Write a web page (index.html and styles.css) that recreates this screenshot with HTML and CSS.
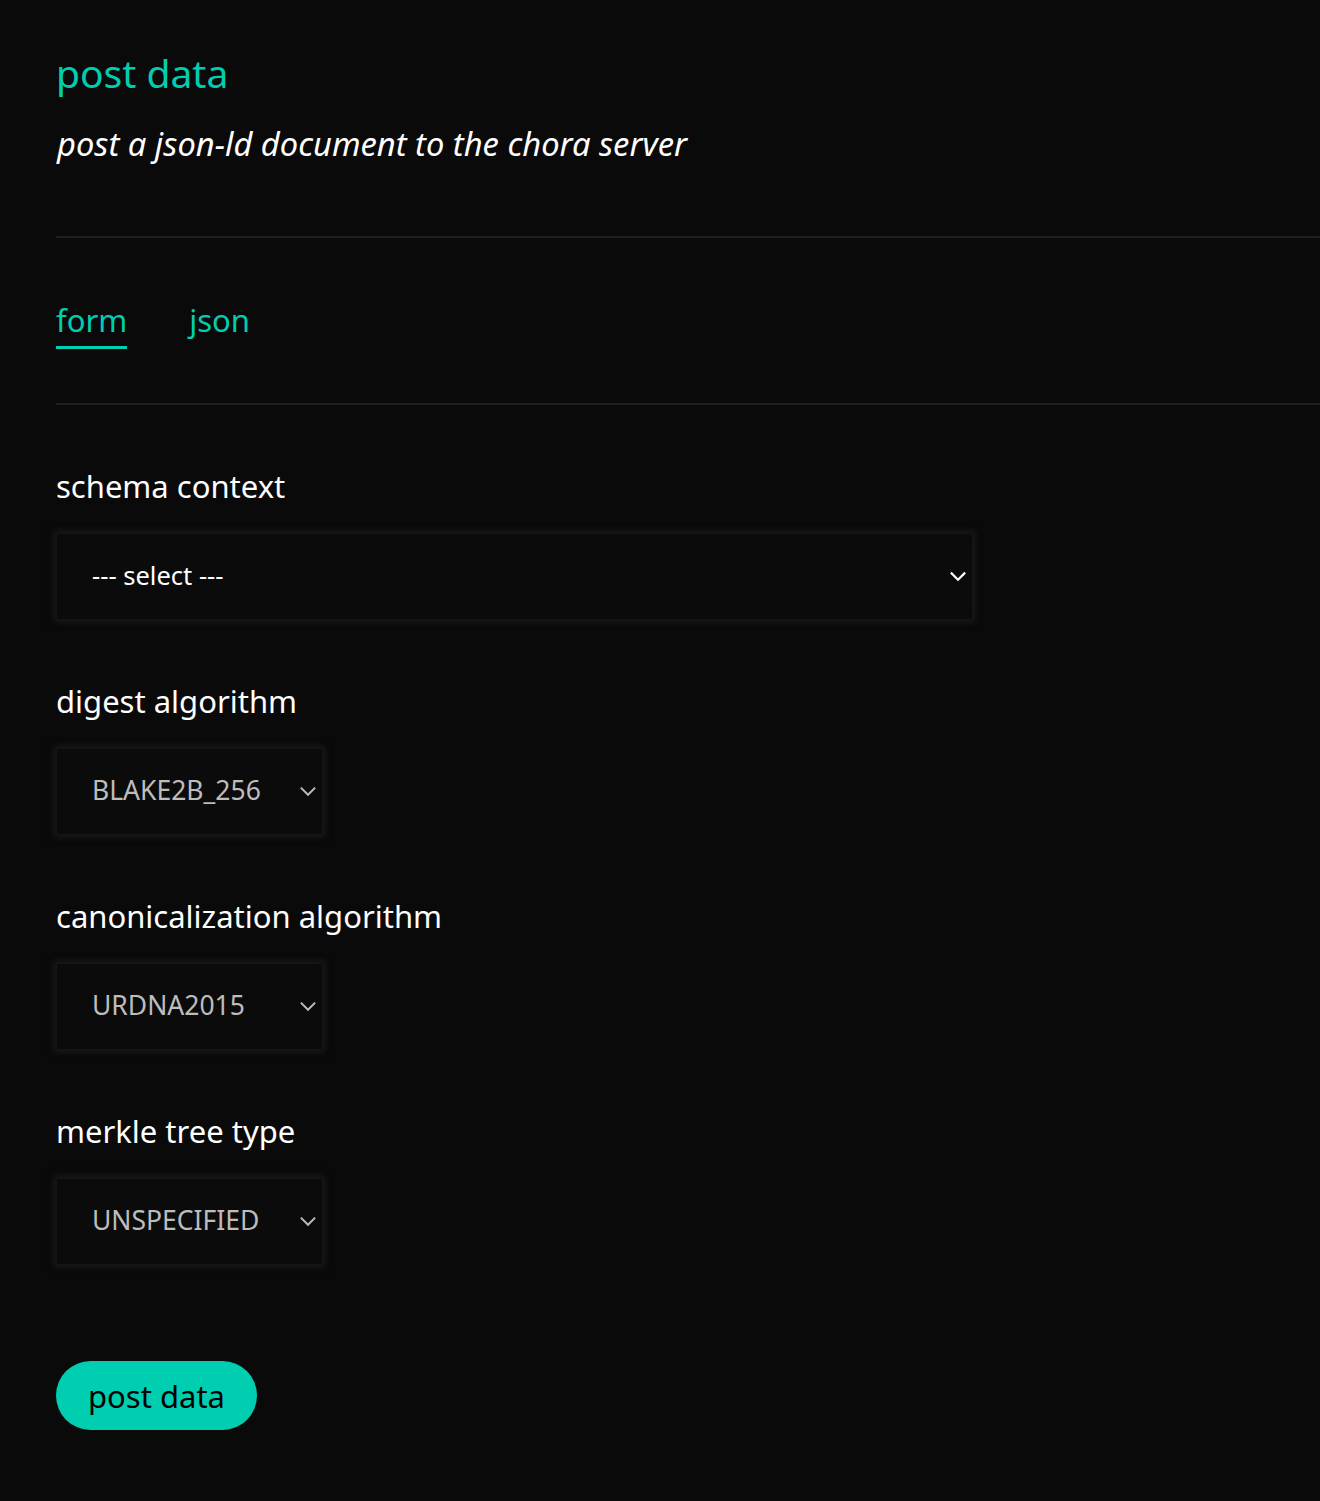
FILE: index.html
```html
<!DOCTYPE html>
<html>
<head>
<meta charset="utf-8">
<link rel="stylesheet" href="styles.css">
</head>
<body>
<main class="page">
  <header class="head">
    <h1 class="title">post data</h1>
    <p class="subtitle">post a json-ld document to the chora server</p>
  </header>
  <nav class="tabs">
    <span class="tab active">form</span>
    <span class="tab">json</span>
  </nav>
  <form class="form">
    <div class="field">
      <label class="label">schema context</label>
      <div class="select wide white">
        <span>--- select ---</span>
        <svg class="chev" viewBox="0 0 16 10" width="18" height="11"><path d="M1.5 1.5 L8 8 L14.5 1.5" fill="none" stroke="#fff" stroke-width="2"/></svg>
      </div>
    </div>
    <div class="field">
      <label class="label">digest algorithm</label>
      <div class="select">
        <span>BLAKE2B_256</span>
        <svg class="chev" viewBox="0 0 16 10" width="18" height="11"><path d="M1.5 1.5 L8 8 L14.5 1.5" fill="none" stroke="#bbb" stroke-width="1.8"/></svg>
      </div>
    </div>
    <div class="field">
      <label class="label">canonicalization algorithm</label>
      <div class="select">
        <span>URDNA2015</span>
        <svg class="chev" viewBox="0 0 16 10" width="18" height="11"><path d="M1.5 1.5 L8 8 L14.5 1.5" fill="none" stroke="#bbb" stroke-width="1.8"/></svg>
      </div>
    </div>
    <div class="field">
      <label class="label">merkle tree type</label>
      <div class="select">
        <span>UNSPECIFIED</span>
        <svg class="chev" viewBox="0 0 16 10" width="18" height="11"><path d="M1.5 1.5 L8 8 L14.5 1.5" fill="none" stroke="#bbb" stroke-width="1.8"/></svg>
      </div>
    </div>
    <button type="button" class="btn">post data</button>
  </form>
</main>
</body>
</html>
```
FILE: styles.css
```css
html, body {
  margin: 0;
  padding: 0;
  background: #0a0a0a;
  font-family: "Noto Sans", "Open Sans", sans-serif;
  color: #fff;
}
.page {
  padding: 47px 0 60px 56px;
  overflow: hidden;
}
.head {
  border-bottom: 2px solid #1f1f1f;
  padding-bottom: 70px;
}
.title {
  margin: 0;
  font-weight: 400;
  font-size: 39px;
  line-height: 52px;
  color: #00ceb0;
}
.subtitle {
  margin: 23px 0 0 1px;
  font-style: italic;
  font-size: 32.7px;
  line-height: 44px;
}
.tabs {
  display: flex;
  gap: 62px;
  border-bottom: 2px solid #1f1f1f;
  padding-top: 62px;
  padding-bottom: 54px;
}
.tab {
  font-size: 31px;
  line-height: 40px;
  color: #00ceb0;
  padding-bottom: 6px;
  border-bottom: 3px solid transparent;
}
.tab.active {
  border-bottom-color: #00ceb0;
}
.form {
  display: flex;
  flex-direction: column;
  align-items: flex-start;
  padding-top: 61px;
}
.field {
  display: flex;
  flex-direction: column;
  align-items: flex-start;
  margin-bottom: 61px;
}
.label {
  font-size: 31px;
  line-height: 40px;
  margin-bottom: 27px;
  color: #fff;
}
.select {
  box-sizing: border-box;
  width: 267px;
  height: 87px;
  display: flex;
  align-items: center;
  justify-content: space-between;
  padding: 0 5px 4px 35px;
  background: #0b0b0b;
  border: 1px solid #151515;
  box-shadow: 0 0 6px 2px rgba(28,28,28,0.9);
  color: #bdbdbd;
  font-size: 26.5px;
}
.select .chev {
  margin-top: 4px;
}
.select.wide {
  width: 917px;
}
.select.white {
  color: #fff;
  font-size: 25.5px;
}
.btn {
  margin-top: 35px;
  width: 201px;
  height: 69px;
  border: none;
  border-radius: 35px;
  background: #00ceb0;
  color: #000;
  font-family: inherit;
  font-size: 31px;
  padding: 0;
  cursor: pointer;
}
```
